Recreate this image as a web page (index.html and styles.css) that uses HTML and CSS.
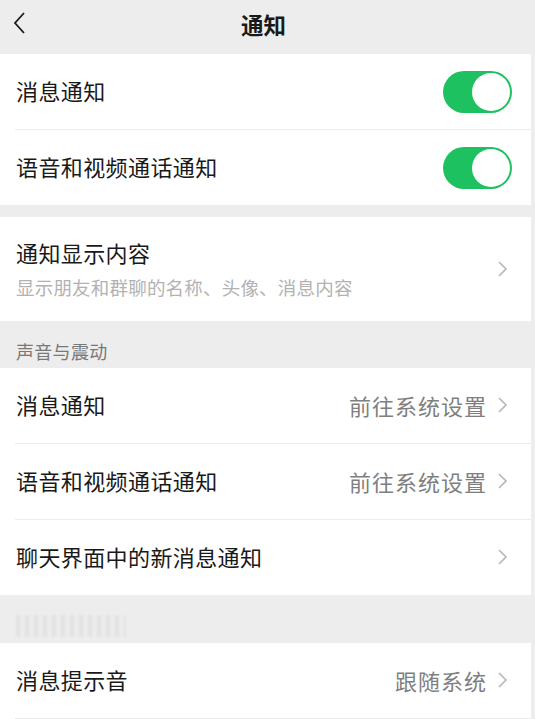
FILE: index.html
```html
<!DOCTYPE html>
<html lang="zh-CN">
<head>
<meta charset="utf-8">
<title>通知</title>
<link rel="stylesheet" href="styles.css">
</head>
<body>
<div class="page">
  <header class="nav">
    <svg class="back" width="14" height="24" viewBox="0 0 14 24"><path d="M12 2 L3 12 L12 22" fill="none" stroke="#1a1a1a" stroke-width="1.8"/></svg>
    <div class="nav-title">通知</div>
  </header>

  <section class="group">
    <div class="row"><div class="cell">
      <span class="label">消息通知</span>
      <span class="switch"><span class="knob"></span></span>
    </div></div>
    <div class="row"><div class="cell last">
      <span class="label">语音和视频通话通知</span>
      <span class="switch"><span class="knob"></span></span>
    </div></div>
  </section>

  <div class="gap"></div>

  <section class="group">
    <div class="row"><div class="cell tall last">
      <div class="two">
        <span class="label">通知显示内容</span>
        <span class="desc">显示朋友和群聊的名称、头像、消息内容</span>
      </div>
      <svg class="chev" width="11" height="18" viewBox="0 0 11 18"><path d="M2 2 L9 9 L2 16" fill="none" stroke="#b5b5b5" stroke-width="1.6"/></svg>
    </div></div>
  </section>

  <div class="section-title">声音与震动</div>

  <section class="group">
    <div class="row"><div class="cell">
      <span class="label">消息通知</span>
      <span class="right"><span class="value">前往系统设置</span><svg class="chev" width="11" height="18" viewBox="0 0 11 18"><path d="M2 2 L9 9 L2 16" fill="none" stroke="#b5b5b5" stroke-width="1.6"/></svg></span>
    </div></div>
    <div class="row"><div class="cell">
      <span class="label">语音和视频通话通知</span>
      <span class="right"><span class="value">前往系统设置</span><svg class="chev" width="11" height="18" viewBox="0 0 11 18"><path d="M2 2 L9 9 L2 16" fill="none" stroke="#b5b5b5" stroke-width="1.6"/></svg></span>
    </div></div>
    <div class="row"><div class="cell last">
      <span class="label">聊天界面中的新消息通知</span>
      <span class="right"><svg class="chev" width="11" height="18" viewBox="0 0 11 18"><path d="M2 2 L9 9 L2 16" fill="none" stroke="#b5b5b5" stroke-width="1.6"/></svg></span>
    </div></div>
  </section>

  <div class="section-title blurred"><span class="blur-bars"></span></div>

  <section class="group">
    <div class="row"><div class="cell">
      <span class="label">消息提示音</span>
      <span class="right"><span class="value">跟随系统</span><svg class="chev" width="11" height="18" viewBox="0 0 11 18"><path d="M2 2 L9 9 L2 16" fill="none" stroke="#b5b5b5" stroke-width="1.6"/></svg></span>
    </div></div>
  </section>
</div>
</body>
</html>
```

FILE: styles.css
```css
* { box-sizing: border-box; }
html, body {
  margin: 0;
  padding: 0;
  background: #ededed;
  font-family: "Noto Sans CJK SC", "Noto Sans", sans-serif;
  color: #191919;
}
.page {
  width: 535px;
  height: 719px;
  overflow: hidden;
  background: #ededed;
}
.nav {
  height: 54px;
  display: flex;
  align-items: center;
  justify-content: center;
  position: relative;
}
.back {
  position: absolute;
  left: 12px;
  top: 11px;
}
.nav-title {
  font-size: 22.5px;
  font-weight: 700;
  margin-left: -8px;
  margin-top: -6px;
}
.group {
  width: 531px;
  background: #fff;
}
.row {
  padding-left: 15px;
}
.cell {
  height: 76px;
  border-bottom: 1px solid #ececec;
  display: flex;
  align-items: center;
  justify-content: space-between;
  padding-left: 1px;
  padding-right: 19px;
}
.cell.last { border-bottom: none; height: 75px; }
.cell.tall { height: 104px; padding-right: 23px; }
.label {
  font-size: 22px;
  letter-spacing: 0.4px;
  line-height: 1;
  margin-top: -3px;
}
.switch {
  width: 69px;
  height: 42px;
  border-radius: 21px;
  background: #1ec15f;
  display: flex;
  justify-content: flex-end;
  align-items: center;
  padding: 2px;
}
.knob {
  width: 38px;
  height: 38px;
  border-radius: 50%;
  background: #fff;
}
.gap { height: 12px; }
.two {
  display: flex;
  flex-direction: column;
  gap: 15px;
  margin-top: 2px;
}
.desc {
  font-size: 18.5px;
  letter-spacing: 0.2px;
  line-height: 1;
  color: #b2b2b2;
}
.right {
  display: flex;
  align-items: center;
  gap: 11px;
  padding-right: 4px;
  margin-top: -2px;
}
.value {
  font-size: 22px;
  letter-spacing: 1px;
  margin-right: -1px;
  line-height: 1;
  color: #7f7f7f;
}
.section-title {
  height: 47px;
  display: flex;
  align-items: flex-end;
  padding: 0 0 8px 16px;
  font-size: 18px;
  letter-spacing: 0.3px;
  line-height: 1;
  color: #787878;
}
.section-title.blurred {
  height: 48px;
  padding-bottom: 6px;
}
.blur-bars {
  display: block;
  width: 110px;
  height: 22px;
  background: repeating-linear-gradient(90deg, #e0e0e0 0 4px, #ececec 4px 9px);
  filter: blur(1.2px);
  opacity: 0.8;
}
```
